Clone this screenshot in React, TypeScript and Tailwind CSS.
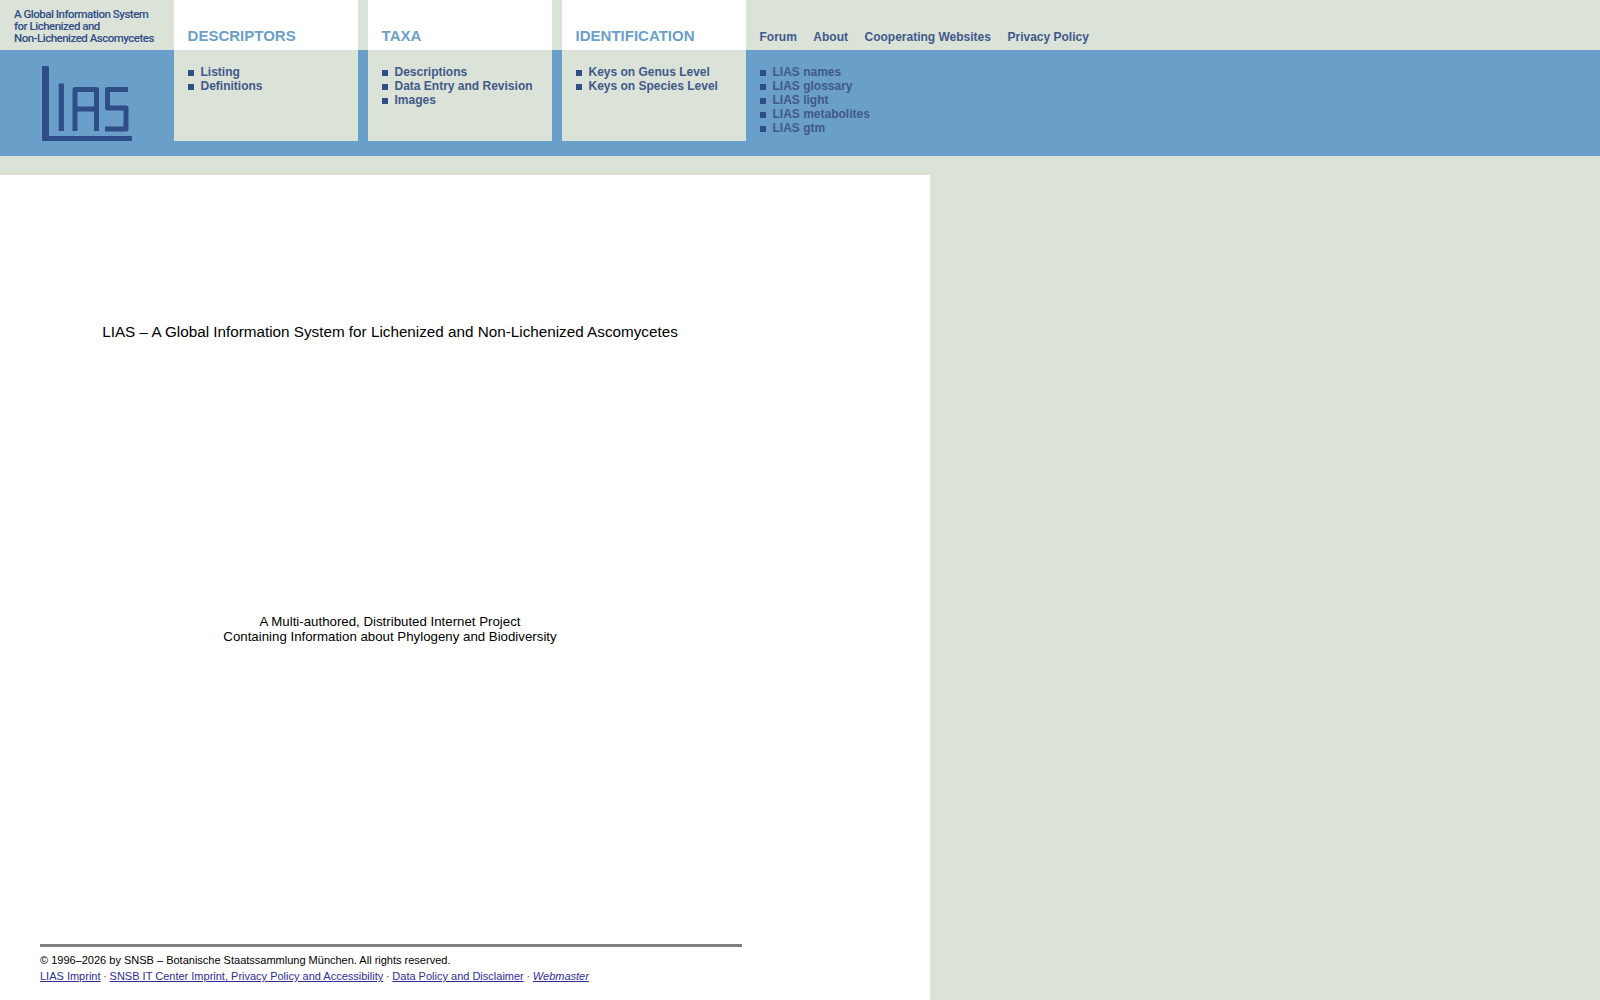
const descriptors = ["Listing", "Definitions"]
const taxa = ["Descriptions", "Data Entry and Revision", "Images"]
const identification = ["Keys on Genus Level", "Keys on Species Level"]
const lias = ["LIAS names", "LIAS glossary", "LIAS light", "LIAS metabolites", "LIAS gtm"]
const topLinks = ["Forum", "About", "Cooperating Websites", "Privacy Policy"]

function LinkList({ items }: { items: string[] }) {
  return (
    <ul>
      {items.map((item) => (
        <li key={item} className="flex h-[14px] items-center text-[12px] leading-[14px] font-bold text-[#41598a]">
          <span className="mt-[2px] mr-[6.5px] h-[6px] w-[6px] bg-[#2f4d86]" />
          {item}
        </li>
      ))}
    </ul>
  )
}

function Tab({ title }: { title: string }) {
  return (
    <div className="h-[50px] w-[184px] bg-white pt-[27px] pl-[13.600px] text-[15px] leading-[17px] font-bold text-[#6a9fc9]">
      {title}
    </div>
  )
}

function Panel({ items }: { items: string[] }) {
  return (
    <div className="h-[91px] w-[184px] bg-[#dbe2d8] pt-[15px] pl-[14px]">
      <LinkList items={items} />
    </div>
  )
}

function Logo() {
  return (
    <svg width="174" height="106" viewBox="0 50 174 106" fill="none" stroke="#2f4d86" strokeWidth="5" strokeLinejoin="round">
      <path
        d="M42 67q0-1 1-1h5q1 0 1 1V136H131q1 0 1 1v3q0 1-1 1H43q-1 0-1-1Z"
        fill="#2f4d86"
        stroke="none"
      />
      <path d="M61.300 83.500V131" strokeWidth="5.200" />
      <path d="M75 131V89.500H96.500V131M75 109H96.500" />
      <path d="M128 89.500H107.500V108H126V129H105" />
    </svg>
  )
}

export default function App() {
  return (
    <div className="flex min-h-[1000px] flex-col bg-[#dbe2d8] font-['Liberation_Sans',Arial,sans-serif]">
      {/* Header */}
      <header className="h-[175px]">
        <div className="flex h-[50px]">
          <div className="w-[174px] pt-[8px] pl-[14px] font-['Roboto',sans-serif] text-[11.500px] leading-[12px] font-medium tracking-[-0.5px] text-[#2f4d86]">
            A Global Information System
            <br />
            for Lichenized and
            <br />
            Non-Lichenized Ascomycetes
          </div>
          <div className="flex gap-[10px]">
            <Tab title="DESCRIPTORS" />
            <Tab title="TAXA" />
            <Tab title="IDENTIFICATION" />
          </div>
          <nav className="flex gap-[16.500px] pt-[30px] pl-[13.500px] text-[12px] leading-[14px] font-bold text-[#41598a]">
            {topLinks.map((link) => (
              <span key={link}>{link}</span>
            ))}
          </nav>
        </div>
        <div className="flex h-[106px] bg-[#6a9fc9]">
          <div className="w-[174px]">
            <Logo />
          </div>
          <div className="flex gap-[10px]">
            <Panel items={descriptors} />
            <Panel items={taxa} />
            <Panel items={identification} />
          </div>
          <div className="pt-[15px] pl-[14px]">
            <LinkList items={lias} />
          </div>
        </div>
      </header>

      {/* Main content */}
      <main className="flex w-[930px] flex-1 flex-col bg-white text-black">
        <div className="w-[780px] pt-[148px] text-center text-[15.250px] leading-[18px]">
          LIAS – A Global Information System for Lichenized and Non-Lichenized Ascomycetes
        </div>
        <div className="w-[780px] pt-[273px] text-center text-[13.280px] leading-[15px]">
          A Multi-authored, Distributed Internet Project
          <br />
          Containing Information about Phylogeny and Biodiversity
        </div>
        <footer className="mt-[300px] ml-[40px] w-[702px]">
          <div className="h-[3px] bg-[#808080]" />
          <p className="mt-[7px] text-[11px] leading-[13px]">
            © 1996–2026 by SNSB – Botanische Staatssammlung München. All rights reserved.
          </p>
          <p className="mt-[3px] text-[11px] leading-[13px] text-[#333]">
            <a className="text-[#2e2e96] underline">LIAS Imprint</a>
            <span className="text-[10.200px]"> · </span>
            <a className="text-[#2e2e96] underline">SNSB IT Center Imprint, Privacy Policy and Accessibility</a>
            <span className="text-[10.200px]"> · </span>
            <a className="text-[#2e2e96] underline">Data Policy and Disclaimer</a>
            <span className="text-[10.200px]"> · </span>
            <a className="text-[#2e2e96] italic underline">Webmaster</a>
          </p>
        </footer>
      </main>
    </div>
  )
}
